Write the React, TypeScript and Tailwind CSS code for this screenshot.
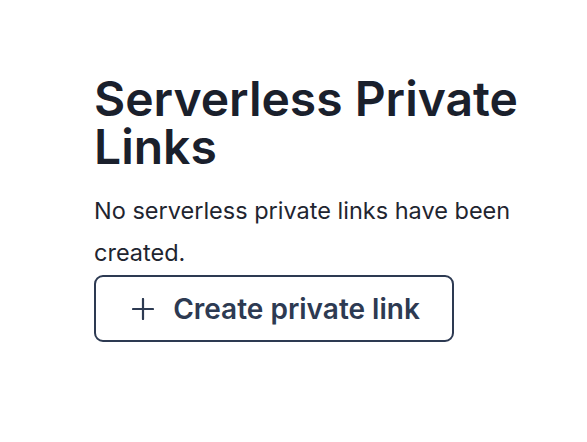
import React from "react";

function PlusIcon() {
  return (
    <svg width="22" height="22" viewBox="0 0 22 22" fill="none" stroke="currentColor" strokeWidth="2.2" strokeLinecap="round">
      <path d="M11 1v20M1 11h20" />
    </svg>
  );
}

export default function App() {
  return (
    <div className="min-h-screen bg-white font-['Inter','Liberation_Sans',sans-serif]">
      <div className="flex flex-col pl-[94px] pt-[75px]">
        <div className="w-[440px]">
          {/* Title */}
          <h1 className="text-5xl leading-none font-semibold text-[#1a202c]">
            Serverless Private Links
          </h1>
          <p className="mt-[19px] text-[23.5px] leading-[42px] text-[#1f2530]">
            No serverless private links have been created.
          </p>
        </div>
        <button className="mt-[1px] flex h-[67px] w-[360px] items-center justify-center gap-[19px] rounded-[9px] border-2 border-[#2d3a52] bg-white pl-[4px] text-[28px] font-semibold text-[#2d3a52]">
          <PlusIcon />
          <span>Create private link</span>
        </button>
      </div>
    </div>
  );
}
